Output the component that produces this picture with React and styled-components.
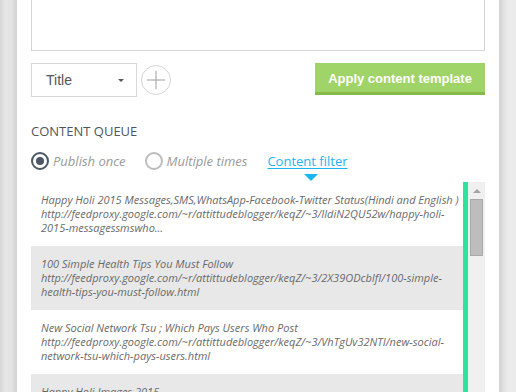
import React from "react";
import styled, { createGlobalStyle } from "styled-components";

const Global = createGlobalStyle`
  html, body { margin: 0; padding: 0; }
  body {
    width: 516px;
    height: 392px;
    overflow: hidden;
    background: #e9e9e9;
    font-family: "Open Sans", "Liberation Sans", sans-serif;
  }
  #root { height: 392px; }
`;

const Page = styled.div`
  display: flex;
  width: 516px;
  height: 392px;
  overflow: hidden;
`;

const Gutter = styled.div`
  flex: 0 0 ${(p) => p.$w}px;
  background: ${(p) =>
    p.$side === "left"
      ? "linear-gradient(to right, #d6d6d6 0px, #e6e6e6 5px, #e4e4e4 11px, #d2d2d2 17px)"
      : "linear-gradient(to right, #d0d0d0 0px, #e2e2e2 5px, #ebebeb 9px, #ebebeb 17px)"};
`;

const Panel = styled.div`
  flex: 0 0 482px;
  width: 482px;
  min-width: 0;
  overflow: hidden;
  background: #fff;
  display: flex;
  flex-direction: column;
`;

const Section = styled.div`
  padding: 0 14px;
  display: flex;
  flex-direction: column;
  min-width: 0;
`;

const TextArea = styled.div`
  margin-top: -10px;
  height: 61px;
  box-sizing: border-box;
  border: 1px solid #d6d6d6;
  background: #fff;
`;

const Controls = styled.div`
  margin-top: 12px;
  display: flex;
  align-items: flex-start;
  height: 34px;
`;

const Select = styled.div`
  width: 106px;
  height: 34px;
  box-sizing: border-box;
  border: 1px solid #d8d8d8;
  display: flex;
  align-items: center;
  padding: 0 12px 0 14px;
  font-family: "Liberation Sans", Arial, sans-serif;
  font-size: 14px;
  color: #555;
  justify-content: space-between;
`;

const Caret = styled.span`
  width: 0;
  height: 0;
  border-left: 3px solid transparent;
  border-right: 3px solid transparent;
  border-top: 3px solid #555;
  margin-top: 1px;
`;

const PlusButton = styled.div`
  margin: 2px 0 0 4px;
  width: 30px;
  height: 30px;
  box-sizing: border-box;
  border: 1px solid #d4d4d4;
  border-radius: 50%;
  display: flex;
  align-items: center;
  justify-content: center;
`;

const ApplyButton = styled.div`
  margin-left: auto;
  width: 170px;
  height: 32px;
  box-sizing: border-box;
  background: #a0d468;
  border-bottom: 3px solid #86bb4b;
  color: #fff;
  font-family: "Liberation Sans", Arial, sans-serif;
  font-weight: bold;
  font-size: 13px;
  display: flex;
  align-items: center;
  justify-content: center;
  padding-top: 2px;
`;

const Divider = styled.div`
  margin-top: 13px;
  height: 1px;
  background: #e3e3e3;
`;

const Heading = styled.div`
  margin-top: 11px;
  font-size: 13px;
  line-height: 20px;
  color: #4f5660;
`;

const RadioRow = styled.div`
  margin-top: 10px;
  height: 20px;
  display: flex;
  align-items: center;
`;

const RadioOption = styled.div`
  display: flex;
  align-items: center;
  gap: 4px;
  margin-right: ${(p) => p.$mr}px;
  font-style: italic;
  font-size: 13px;
  color: #9a9a9a;
`;

const RadioCircle = styled.span`
  width: 18px;
  height: 18px;
  box-sizing: border-box;
  border-radius: 50%;
  border: 2px solid ${(p) => (p.$checked ? "#4c5665" : "#bcbcbc")};
  display: flex;
  align-items: center;
  justify-content: center;
  &::after {
    content: "";
    display: ${(p) => (p.$checked ? "block" : "none")};
    width: 8px;
    height: 8px;
    border-radius: 50%;
    background: #4c5665;
  }
`;

const FilterLink = styled.a`
  position: relative;
  font-size: 13px;
  color: #1db5f0;
  text-decoration: underline;
  text-underline-offset: 2px;
  cursor: pointer;
  &::after {
    content: "";
    position: absolute;
    left: 37px;
    top: 22px;
    border-left: 7.5px solid transparent;
    border-right: 7.5px solid transparent;
    border-top: 7px solid #1db5f0;
  }
`;

const ListWrap = styled.div`
  margin-top: 11px;
  display: flex;
  height: 220px;
  min-width: 0;
`;

const List = styled.div`
  flex: 1;
  min-width: 0;
  display: flex;
  flex-direction: column;
  border-right: 5px solid #2ee39b;
`;

const Item = styled.div`
  flex: 0 0 64px;
  box-sizing: border-box;
  padding: 11px 10px;
  background: ${(p) => (p.$alt ? "#e8e8e8" : "#fff")};
  font-style: italic;
  font-size: 11px;
  line-height: 14px;
  color: #6a6a6a;
  overflow: hidden;
`;

const Line = styled.div`
  white-space: nowrap;
`;

const Scrollbar = styled.div`
  flex: 0 0 17px;
  background: #f0f0f0;
  display: flex;
  flex-direction: column;
  align-items: center;
`;

const ScrollArrow = styled.span`
  margin-top: 7px;
  width: 0;
  height: 0;
  border-left: 4px solid transparent;
  border-right: 4px solid transparent;
  border-bottom: 4px solid #a3a3a3;
`;

const Thumb = styled.div`
  margin-top: 6px;
  width: 13px;
  height: 57px;
  box-sizing: border-box;
  background: #bdbdbd;
  border: 1px solid #a9a9a9;
`;

const items = [
  [
    "Happy Holi 2015 Messages,SMS,WhatsApp-Facebook-Twitter Status(Hindi and English )",
    "http://feedproxy.google.com/~r/attittudeblogger/keqZ/~3/IldiN2QU52w/happy-holi-",
    "2015-messagessmswho…",
  ],
  [
    "100 Simple Health Tips You Must Follow",
    "http://feedproxy.google.com/~r/attittudeblogger/keqZ/~3/2X39ODcbIfI/100-simple-",
    "health-tips-you-must-follow.html",
  ],
  [
    "New Social Network Tsu ; Which Pays Users Who Post",
    "http://feedproxy.google.com/~r/attittudeblogger/keqZ/~3/VhTgUv32NTI/new-social-",
    "network-tsu-which-pays-users.html",
  ],
  ["Happy Holi Images 2015", "", ""],
];

export default function App() {
  return (
    <>
      <Global />
      <Page>
        <Gutter $w={17} $side="left" />
        <Panel>
          <Section>
            <TextArea />
            <Controls>
              <Select>
                <span>Title</span>
                <Caret />
              </Select>
              <PlusButton>
                <svg width="18" height="18" viewBox="0 0 18 18">
                  <path d="M9 0v18M0 9h18" stroke="#9aa0a6" strokeWidth="1" fill="none" />
                </svg>
              </PlusButton>
              <ApplyButton>Apply content template</ApplyButton>
            </Controls>
          </Section>
          <Divider />
          <Section>
            <Heading>CONTENT QUEUE</Heading>
            <RadioRow>
              <RadioOption $mr={19}>
                <RadioCircle $checked />
                Publish once
              </RadioOption>
              <RadioOption $mr={20}>
                <RadioCircle />
                Multiple times
              </RadioOption>
              <FilterLink>Content filter</FilterLink>
            </RadioRow>
            <ListWrap>
              <List>
                {items.map((it, i) => (
                  <Item key={i} $alt={i % 2 === 1}>
                    {it.map((l, j) => (l ? <Line key={j}>{l}</Line> : null))}
                  </Item>
                ))}
              </List>
              <Scrollbar>
                <ScrollArrow />
                <Thumb />
              </Scrollbar>
            </ListWrap>
          </Section>
        </Panel>
        <Gutter $w={17} $side="right" />
      </Page>
    </>
  );
}
